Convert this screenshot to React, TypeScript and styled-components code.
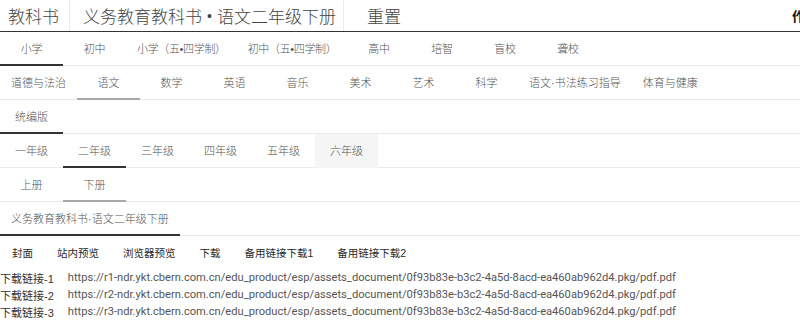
import styled, { createGlobalStyle } from "styled-components";

const GlobalStyle = createGlobalStyle`
  html, body {
    margin: 0;
    padding: 0;
    background: #fff;
    overflow-x: hidden;
  }
  body {
    font-family: "Liberation Sans", "Noto Sans CJK SC", sans-serif;
    color: #333;
  }
`

type TabState = 'active' | 'muted' | 'hover' | undefined

interface TabItem {
  label: string
  state?: TabState
}

const levels: TabItem[] = [
  { label: '小学', state: 'active' },
  { label: '初中' },
  { label: '小学（五•四学制）' },
  { label: '初中（五•四学制）' },
  { label: '高中' },
  { label: '培智' },
  { label: '盲校' },
  { label: '聋校' },
]

const subjects: TabItem[] = [
  { label: '道德与法治' },
  { label: '语文', state: 'muted' },
  { label: '数学' },
  { label: '英语' },
  { label: '音乐' },
  { label: '美术' },
  { label: '艺术' },
  { label: '科学' },
  { label: '语文·书法练习指导' },
  { label: '体育与健康' },
]

const editions: TabItem[] = [{ label: '统编版', state: 'active' }]

const grades: TabItem[] = [
  { label: '一年级' },
  { label: '二年级', state: 'active' },
  { label: '三年级' },
  { label: '四年级' },
  { label: '五年级' },
  { label: '六年级', state: 'hover' },
]

const volumes: TabItem[] = [
  { label: '上册' },
  { label: '下册', state: 'muted' },
]

const books: TabItem[] = [{ label: '义务教育教科书·语文二年级下册', state: 'active' }]

const actions = ['封面', '站内预览', '浏览器预览', '下载', '备用链接下载1', '备用链接下载2']

const path = 'ndr.ykt.cbern.com.cn/edu_product/esp/assets_document/0f93b83e-b3c2-4a5d-8acd-ea460ab962d4.pkg/pdf.pdf'

function TabBar({ items, tight }: { items: TabItem[], tight?: boolean }) {
  return (
    <Row>
      {items.map((item) => (
        <Tab key={item.label} $state={item.state} $tight={tight}>{item.label}</Tab>
      ))}
    </Row>
  )
}

export default function App() {
  return (
    <Page>
      <GlobalStyle />
      <Header>
        <HeadCell $pl={8} $pr={10}>教科书</HeadCell>
        <HeadCell $pl={13} $pr={7}>义务教育教科书<Dot>•</Dot>语文二年级下册</HeadCell>
        <HeadCell $pl={23} $pr={0} $plain>重置</HeadCell>
        <Author>作者</Author>
      </Header>

      <TabBar items={levels} tight />
      <TabBar items={subjects} />
      <TabBar items={editions} />
      <TabBar items={grades} />
      <TabBar items={volumes} />
      <TabBar items={books} />

      <Actions>
        {actions.map((a) => <Action key={a}>{a}</Action>)}
      </Actions>

      <Links>
        {[1, 2, 3].map((n) => (
          <LinkLine key={n}>
            <LinkLabel>下载链接-{n}</LinkLabel>
            <LinkUrl>https://r{n}-{path}</LinkUrl>
          </LinkLine>
        ))}
      </Links>
    </Page>
  )
}

const Page = styled.div`
  width: 100%;
  display: flex;
  flex-direction: column;
`

const Header = styled.header`
  min-width: 830px;
  height: 32px;
  box-sizing: border-box;
  display: flex;
  align-items: stretch;
  border-bottom: 1px solid #333;
`

const HeadCell = styled.div<{ $pl: number, $pr: number, $plain?: boolean }>`
  display: flex;
  align-items: center;
  padding: 0 ${({ $pr }) => $pr}px 0 ${({ $pl }) => $pl}px;
  font-size: 17px;
  font-weight: 300;
  color: #444;
  white-space: nowrap;
  border-right: ${({ $plain }) => $plain ? 'none' : '1px solid #ececec'};
`

const Dot = styled.span`
  margin: 0 5px;
  font-size: 14px;
`

const Author = styled.div`
  margin-left: auto;
  padding-right: 12px;
  display: flex;
  align-items: center;
  font-family: "Noto Sans CJK SC", sans-serif;
  font-size: 13px;
  font-weight: 700;
  color: #111;
`

const Row = styled.nav`
  height: 34px;
  box-sizing: border-box;
  display: flex;
  border-bottom: 1px solid #ebebeb;
`

const Tab = styled.div<{ $state?: TabState, $tight?: boolean }>`
  min-width: 63px;
  height: 34px;
  margin-bottom: -1px;
  box-sizing: border-box;
  padding: 0 11px;
  display: flex;
  align-items: center;
  justify-content: center;
  font-size: 11px;
  font-weight: 300;
  letter-spacing: ${({ $tight }) => $tight ? '-0.35px' : '0'};
  color: #555;
  white-space: nowrap;
  background: ${({ $state }) => $state === 'hover' ? '#f5f5f5' : 'transparent'};
  border-bottom: 2px solid ${({ $state }) =>
    $state === 'active' ? '#333'
    : $state === 'muted' ? '#a8a8a8'
    : 'transparent'};
`

const Actions = styled.div`
  height: 33px;
  display: flex;
  align-items: center;
`

const Action = styled.span`
  padding: 0 12px;
  font-size: 10.5px;
  color: #2a2a2a;
  white-space: nowrap;
`

const Links = styled.div`
  display: flex;
  flex-direction: column;
`

const LinkLine = styled.div`
  height: 17px;
  display: flex;
  align-items: center;
  gap: 14px;
  white-space: nowrap;
`

const LinkLabel = styled.span`
  font-size: 11px;
  color: #333;
`

const LinkUrl = styled.span`
  font-family: Roboto, "Liberation Sans", sans-serif;
  font-size: 11.15px;
  color: #555;
`
